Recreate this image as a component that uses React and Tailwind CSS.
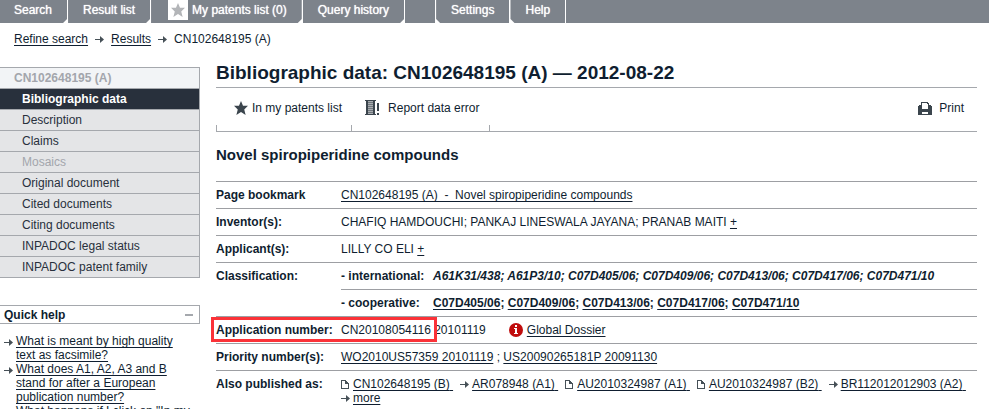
import React, { useState } from 'react';

const tabs = ['Search', 'Result list', 'My patents list (0)', 'Query history'];
const rightTabs = ['Settings', 'Help'];

const menu = [
  'Bibliographic data',
  'Description',
  'Claims',
  'Mosaics',
  'Original document',
  'Cited documents',
  'Citing documents',
  'INPADOC legal status',
  'INPADOC patent family',
];

const questions = [
  'What is meant by high quality text as facsimile?',
  'What does A1, A2, A3 and B stand for after a European publication number?',
  'What happens if I click on "In my patents list"?',
];

const ipc = 'A61K31/438; A61P3/10; C07D405/06; C07D409/06; C07D413/06; C07D417/06; C07D471/10';
const cpc = ['C07D405/06', 'C07D409/06', 'C07D413/06', 'C07D417/06', 'C07D471/10'];

const published = [
  { name: 'CN102648195 (B)', doc: true },
  { name: 'AR078948 (A1)', doc: false },
  { name: 'AU2010324987 (A1)', doc: true },
  { name: 'AU2010324987 (B2)', doc: true },
  { name: 'BR112012012903 (A2)', doc: false },
];

function Arrow() {
  return (
    <svg width="9" height="9" viewBox="0 0 9 9" className="shrink-0" fill="#465057">
      <path d="M0 4h5v1H0z" />
      <path d="M5 1l4 3.5L5 8z" />
    </svg>
  );
}

function DocIcon() {
  return (
    <svg width="9" height="9" viewBox="0 0 9 9" className="shrink-0" fill="#465057" shapeRendering="crispEdges">
      <path d="M0 0h5v1h1v1h1v1h1v6H0zM1 1v7h6V4H4V1z" fillRule="evenodd" />
    </svg>
  );
}

function Star({ size, color }) {
  return (
    <svg width={size} height={size} viewBox="0 0 16 16" fill={color} className="shrink-0">
      <path d="M8 0l2.3 5.5H16l-4.3 4.2L13.3 16 8 12.6 2.7 16l1.6-6.3L0 5.5h5.7z" />
    </svg>
  );
}

function ReportIcon() {
  return (
    <svg width="16" height="16" viewBox="0 0 16 16" className="shrink-0" shapeRendering="crispEdges">
      <path fill="#a9adb1" d="M2 1h7v13H2z" />
      <path fill="#3b454d" d="M0 0h11v1H0zM1 1h2v13H1zM8 1h2v13H8zM0 14h11v1H0z" />
      <path fill="#6f767c" d="M3 2h5v1H3zM3 4h5v1H3zM3 6h5v1H3zM3 8h5v1H3zM3 10h5v1H3zM3 12h5v1H3z" />
      <path fill="#3b454d" d="M12 3h2v8h-2zM12 13h2v2h-2z" />
    </svg>
  );
}

function PrintIcon() {
  return (
    <svg width="14" height="14" viewBox="0 0 14 14" className="shrink-0" shapeRendering="crispEdges">
      <path fill="#3b454d" d="M3 1h7v1h1v2h2v1h1v9H0V5h1V4h2z" />
      <path fill="#fff" d="M4 2h5v1h1v5H4zM4 11h6v2H4z" />
    </svg>
  );
}

function Row({ label, children }) {
  return (
    <tr>
      <th className="border-t border-[#9d9fa3] text-left font-bold whitespace-nowrap">{label}</th>
      <td colSpan={2} className="border-t border-[#9d9fa3]">{children}</td>
    </tr>
  );
}

function Link({ children }) {
  return <a href="#" className="underline underline-offset-2">{children}</a>;
}

function App() {
  const [active, setActive] = useState('Bibliographic data');
  const [helpOpen, setHelpOpen] = useState(true);

  return (
    <div className="h-screen overflow-hidden bg-white pr-[5px] text-xs text-[#0f1e30] font-['Liberation_Sans',Arial,sans-serif]">
      <nav className="flex h-[23px] gap-px leading-5 text-white [text-shadow:0_0_1px_#fff]">
        {tabs.map((tab, i) => (
          <a
            key={tab}
            href="#"
            className="flex bg-[#7d838b] px-[15px] first:pl-[14px] [clip-path:polygon(0_0,100%_0,100%_calc(100%-4px),calc(100%-4px)_100%,0_100%)]"
          >
            {i === 2 && (
              <span className="mr-1 ml-0.5 flex size-5 items-center justify-center bg-white">
                <Star size={14} color="#b3b5b8" />
              </span>
            )}
            {tab}
          </a>
        ))}
        <div className="w-[30px] bg-[#7d838b]" />
        {rightTabs.map(tab => (
          <a
            key={tab}
            href="#"
            className="bg-[#7d838b] px-[15px] [clip-path:polygon(0_0,100%_0,100%_100%,4px_100%,0_calc(100%-4px))]"
          >
            {tab}
          </a>
        ))}
        <div className="flex-1 bg-[#7d838b]" />
      </nav>

      <div className="flex h-11 items-start gap-[7px] pt-2 pl-[14px] leading-4">
        <Link>Refine search</Link>
        <span className="flex h-4 items-center"><Arrow /></span>
        <Link>Results</Link>
        <span className="flex h-4 items-center"><Arrow /></span>
        <span>CN102648195 (A)</span>
      </div>

      <div className="flex gap-4 pr-3">
        <aside className="w-[200px] shrink-0">
          <div className="border-r border-b border-[#a5a8ad] leading-5">
            <div className="border-t border-[#a5a8ad] bg-[#f2f4f6] pl-[14px] font-bold text-[#a3a6ac]">CN102648195 (A)</div>
            {menu.map(item => (
              <button
                key={item}
                type="button"
                disabled={item === 'Mosaics'}
                onClick={() => setActive(item)}
                className={
                  'block w-full border-t border-[#a5a8ad] pl-[22px] text-left ' +
                  (item === active
                    ? 'bg-[#28303c] font-bold text-white'
                    : item === 'Mosaics'
                      ? 'bg-[#e4e5e7] text-[#a3a6ac]'
                      : 'bg-[#e4e5e7] text-[#28303c]')
                }
              >
                {item}
              </button>
            ))}
          </div>

          <button
            type="button"
            onClick={() => setHelpOpen(!helpOpen)}
            className="mt-[27px] flex h-[19px] w-full items-center justify-between border-y border-r border-[#a5a8ad] pr-1.5 pl-1 font-bold"
          >
            Quick help
            <span className="h-0.5 w-2 bg-[#a5a8ad]" />
          </button>
          {helpOpen && (
            <ul className="mt-[10px] pr-2 pl-1 leading-[14px]">
              {questions.map(q => (
                <li key={q} className="flex gap-[3px]">
                  <span className="flex h-4 items-center"><Arrow /></span>
                  <Link>{q}</Link>
                </li>
              ))}
            </ul>
          )}
        </aside>

        <main className="min-w-0 flex-1">
          <h1 className="-mt-2 h-[29px] border-b border-[#a5a8ad] text-[19px] leading-7 font-bold">
            Bibliographic data: CN102648195 (A) — 2012-08-22
          </h1>

          <div className="flex h-11 border-b border-[#a5a8ad] leading-4">
            <div className="relative pt-3 pr-[9px] pl-[18px] before:absolute before:bottom-0 before:left-0 before:h-1.5 before:border-l before:border-[#a5a8ad]">
              <button type="button" className="flex items-center gap-1">
                <Star size={14} color="#3b454d" />
                In my patents list
              </button>
            </div>
            <div className="relative pt-3 pr-[11px] pl-[14px] before:absolute before:bottom-0 before:left-0 before:h-1.5 before:border-l before:border-[#a5a8ad] after:absolute after:right-0 after:bottom-0 after:h-1.5 after:border-l after:border-[#a5a8ad]">
              <button type="button" className="flex items-center gap-[7px]">
                <ReportIcon />
                Report data error
              </button>
            </div>
            <button type="button" className="ml-auto flex items-center gap-[7px] self-start pt-3 pr-[13px]">
              <PrintIcon />
              Print
            </button>
          </div>

          <h2 className="h-[49px] pt-[11px] text-[15px] leading-6 font-bold">Novel spiropiperidine compounds</h2>

          <table className="w-full table-fixed border-separate border-spacing-0 leading-[26px]">
            <colgroup>
              <col className="w-[125px]" />
              <col className="w-[92px]" />
              <col />
            </colgroup>
            <tbody>
              <Row label="Page bookmark">
                <Link>CN102648195 (A)&nbsp; -&nbsp; Novel spiropiperidine compounds</Link>
              </Row>
              <Row label="Inventor(s):">
                CHAFIQ HAMDOUCHI; PANKAJ LINESWALA JAYANA; PRANAB MAITI <Link>+</Link>
              </Row>
              <Row label="Applicant(s):">
                LILLY CO ELI <Link>+</Link>
              </Row>
              <tr>
                <th rowSpan={2} className="border-t border-[#9d9fa3] text-left align-top font-bold">Classification:</th>
                <th className="border-t border-[#9d9fa3] text-left font-bold whitespace-nowrap">- international:</th>
                <td className="border-t border-[#9d9fa3] font-bold italic">{ipc}</td>
              </tr>
              <tr>
                <th className="border-t border-[#9d9fa3] text-left font-bold whitespace-nowrap">- cooperative:</th>
                <td className="border-t border-[#9d9fa3] font-bold">
                  {cpc.map((code, i) => (
                    <React.Fragment key={code}>
                      <Link>{code}</Link>{i < cpc.length - 1 && '; '}
                    </React.Fragment>
                  ))}
                </td>
              </tr>
              <Row
                label={
                  <div className="relative">
                    Application number:
                    <span className="absolute top-0 -left-[5px] h-[25px] w-[226px] border-3 border-[#fb3238]" />
                  </div>
                }
              >
                <div className="flex items-center">
                  CN20108054116 20101119
                  <svg width="14" height="14" viewBox="0 0 14 14" className="mr-1 ml-[23px]">
                    <circle cx="7" cy="7" r="7" fill="#c00d0d" />
                    <path fill="#fff" d="M6 2h2v2H6zM5 5h3v5h1v1H5v-1h1V6H5z" />
                  </svg>
                  <Link>Global Dossier</Link>
                </div>
              </Row>
              <Row label="Priority number(s):">
                <Link>WO2010US57359 20101119</Link> ; <Link>US20090265181P 20091130</Link>
              </Row>
              <tr className="align-top">
                <th className="border-t border-[#9d9fa3] text-left font-bold">Also published as:</th>
                <td colSpan={2} className="border-t border-[#9d9fa3] pt-1.5 leading-[14px]">
                  <div className="flex flex-wrap gap-x-[7px]">
                    {published.map(p => (
                      <span key={p.name} className="flex items-center gap-[3px]">
                        {p.doc ? <DocIcon /> : <Arrow />}
                        <Link>{p.name}&nbsp;</Link>
                      </span>
                    ))}
                    <span className="flex items-center gap-[3px]">
                      <Arrow />
                      <Link>more</Link>
                    </span>
                  </div>
                </td>
              </tr>
            </tbody>
          </table>
        </main>
      </div>
    </div>
  );
}

export default App;
